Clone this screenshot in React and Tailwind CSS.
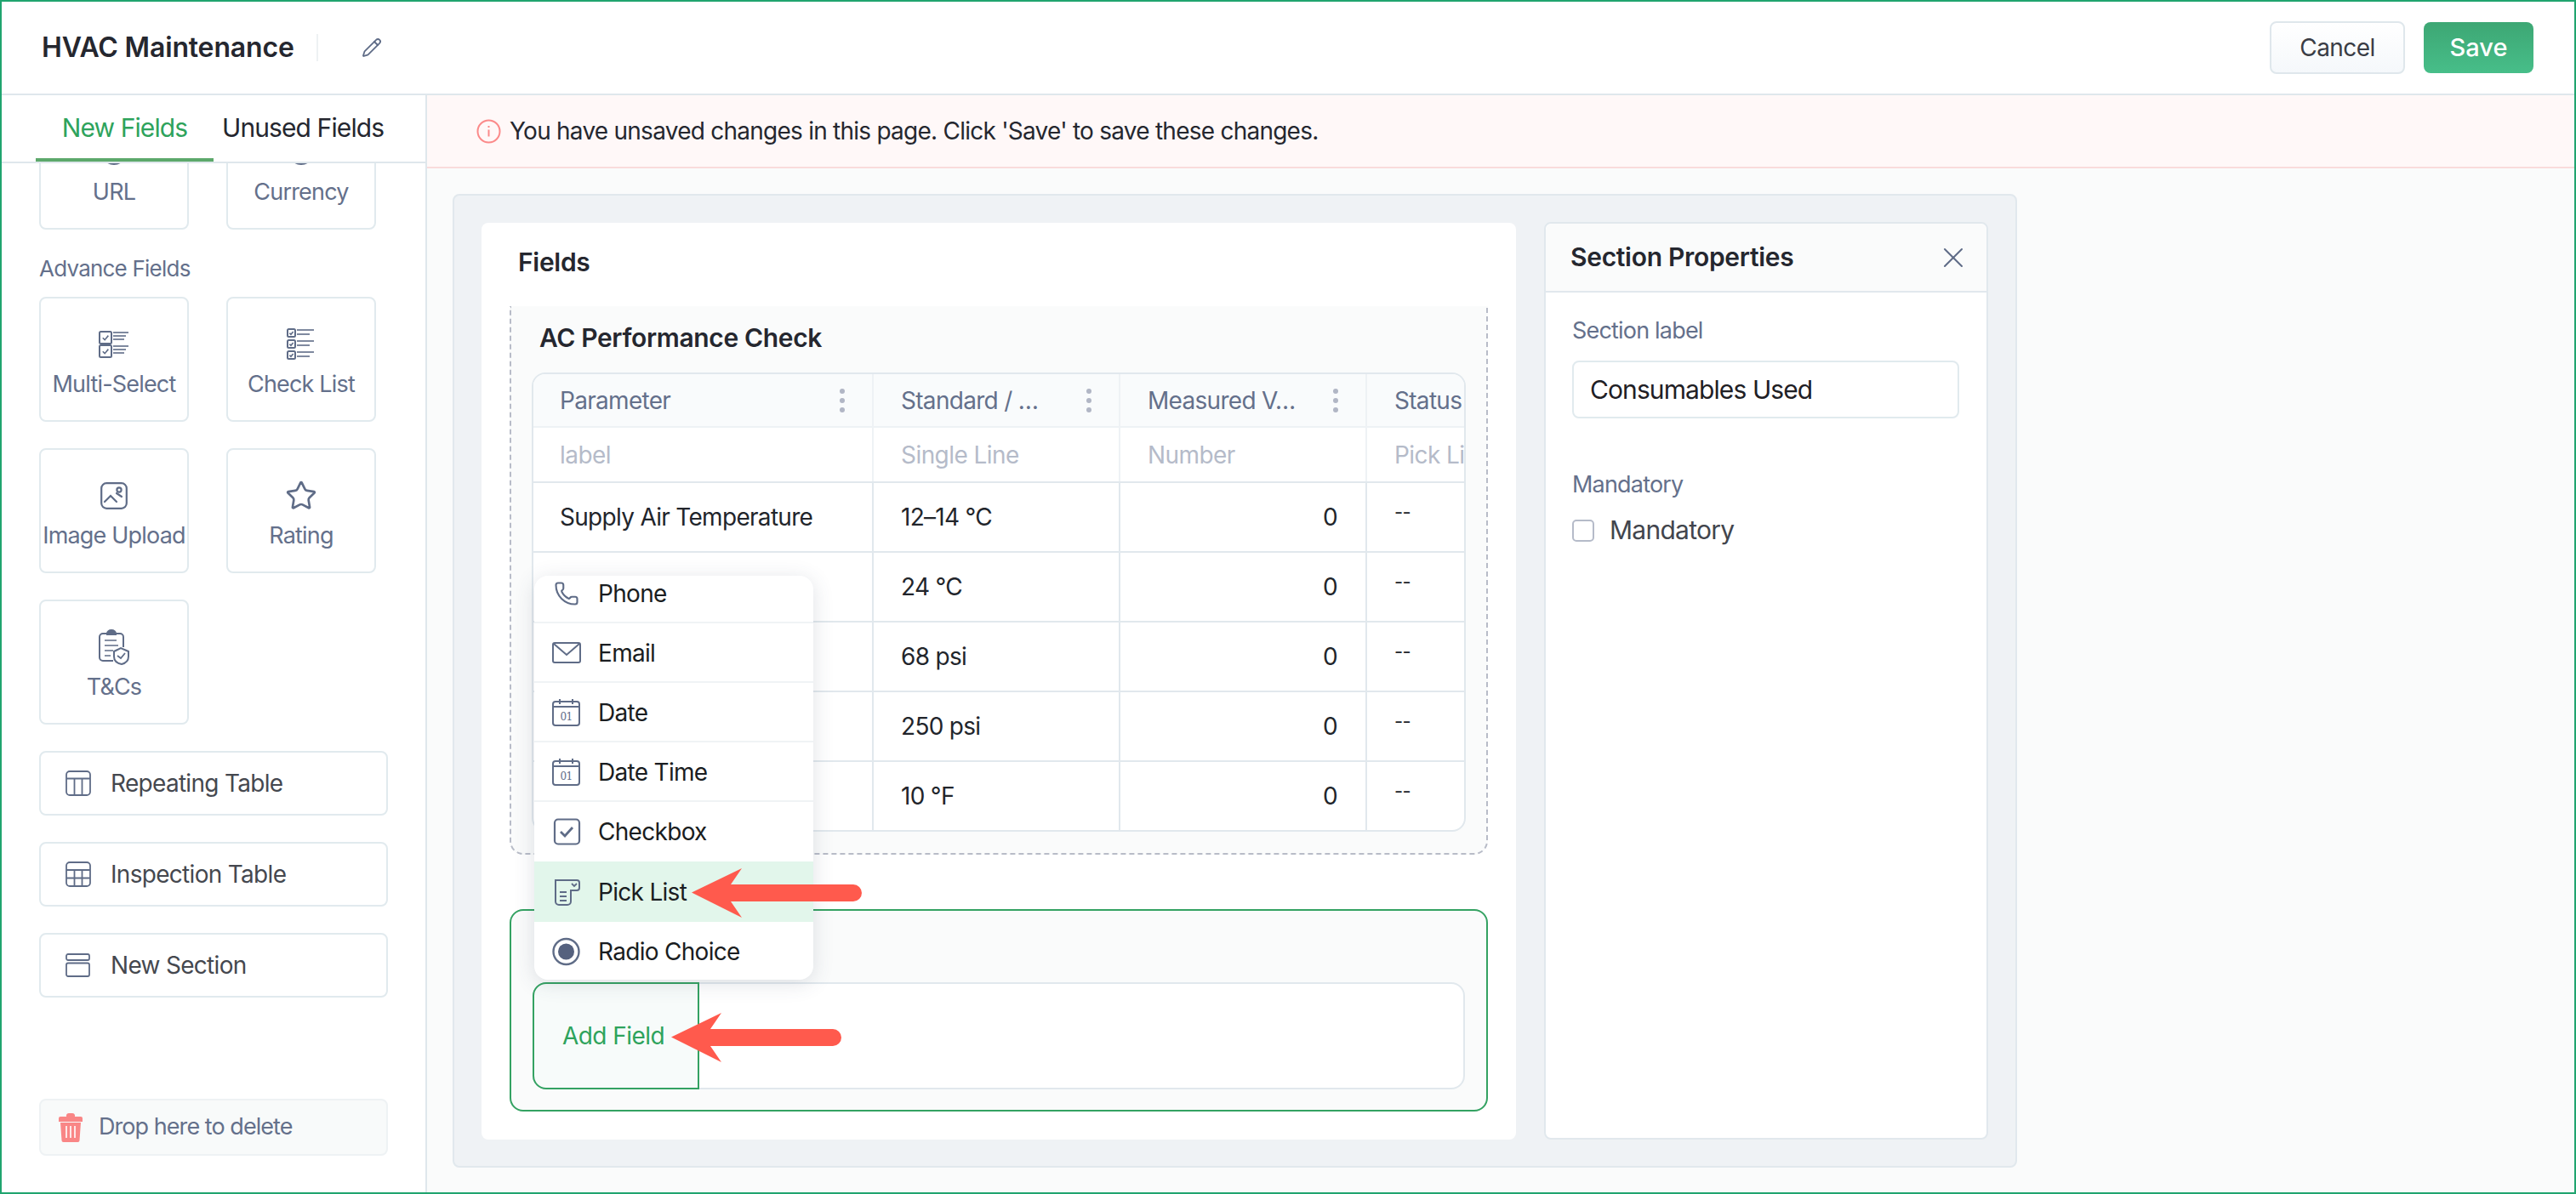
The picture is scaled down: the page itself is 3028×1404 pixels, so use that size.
// App.jsx
import React from "react";
import { Pencil, Phone, Star, X } from "lucide-react";

const ink = "#5f6c87";

const CheckRow = ({ x, y, s, w, lines }) => (
  <g>
    <rect x={x} y={y} width={s} height={s} rx="1.5" fill="none" stroke={ink} strokeWidth="2" />
    <path d={`M${x + s * 0.27} ${y + s * 0.52}l${s * 0.17} ${s * 0.17} ${s * 0.3} -${s * 0.36}`} fill="none" stroke={ink} strokeWidth="1.6" />
    {lines.map((l, i) => (
      <path key={i} d={`M${x + s + 2} ${y + l[0]}h${l[1]}`} stroke={ink} strokeWidth="1.6" />
    ))}
  </g>
);

const MultiSelectIcon = () => (
  <svg width="36" height="32" viewBox="0 0 36 32">
    <CheckRow x={1} y={1} s={14} w={18} lines={[[1, 18], [5, 15], [9, 13]]} />
    <CheckRow x={1} y={17} s={14} w={18} lines={[[1, 18], [5, 15], [9, 13]]} />
  </svg>
);

const CheckListIcon = () => (
  <svg width="34" height="38" viewBox="0 0 34 38">
    <CheckRow x={1} y={1} s={9} w={19} lines={[[1, 20], [6, 15]]} />
    <CheckRow x={1} y={14} s={9} w={19} lines={[[1, 20], [6, 15]]} />
    <CheckRow x={1} y={27} s={9} w={19} lines={[[1, 20], [6, 15]]} />
  </svg>
);

const ImageIcon = () => (
  <svg width="32" height="32" viewBox="0 0 32 32" fill="none" stroke={ink} strokeWidth="2.2">
    <rect x="1.2" y="1.2" width="29.6" height="29.6" rx="6" />
    <circle cx="22" cy="9" r="2.6" />
    <path d="M5 23l7-7 7 7M19 13l6 4" strokeLinecap="round" />
  </svg>
);

const TermsIcon = () => (
  <svg width="36" height="42" viewBox="0 0 36 42" fill="none" stroke={ink} strokeWidth="2">
    <path d="M17 37H5a4 4 0 0 1-4-4V9a4 4 0 0 1 4-4h20a4 4 0 0 1 4 4v12" />
    <path d="M10 5c0-2 2-4 5-4s5 2 5 4v1H10z" fill={ink} />
    <path d="M7 13h14M7 19h16M7 25h10M7 31h7" strokeWidth="1.6" />
    <path d="M18 26l8-4 9 4v6c0 5-4 8-8 9-5-1-9-4-9-9z" fill="#fff" />
    <path d="M22 31l4 3 5-6" strokeWidth="1.8" />
  </svg>
);

const RepeatIcon = () => (
  <svg width="30" height="30" viewBox="0 0 30 30" fill="none" stroke={ink} strokeWidth="1.8">
    <rect x="1" y="1" width="28" height="28" rx="4" />
    <path d="M1 9.5h28M10.5 9.5V29M19.5 9.5V29" />
  </svg>
);

const InspectIcon = () => (
  <svg width="30" height="30" viewBox="0 0 30 30" fill="none" stroke={ink} strokeWidth="1.8">
    <rect x="1" y="1" width="28" height="28" rx="4" />
    <path d="M1 10h28M1 19.5h28M10.5 10v19M19.5 10v19" />
  </svg>
);

const SectionIcon = () => (
  <svg width="30" height="28" viewBox="0 0 30 28" fill="none" stroke={ink} strokeWidth="1.8">
    <rect x="1" y="1" width="27" height="7" rx="2" />
    <rect x="1" y="11.5" width="27" height="15.5" rx="2" />
  </svg>
);

const TrashIcon = () => (
  <svg width="30" height="36" viewBox="0 0 30 36">
    <path d="M10 3a3 3 0 0 1 3-2h4a3 3 0 0 1 3 2v2h7a2 2 0 0 1 2 2v4H1V7a2 2 0 0 1 2-2h7z" fill="#f98686" />
    <path d="M3 12h24l-1.500 21a2 2 0 0 1-2 2H6.500a2 2 0 0 1-2-2z" fill="#f98686" />
    <path d="M10 16v14M15 16v14M20 16v14" stroke="#fff" strokeWidth="1.6" />
  </svg>
);

const MailIcon = () => (
  <svg width="34" height="26" viewBox="0 0 34 26" fill="none" stroke={ink} strokeWidth="2">
    <rect x="1" y="1" width="32" height="23" rx="2" />
    <path d="M2 2l15 13L32 2" />
  </svg>
);

const CalendarIcon = () => (
  <svg width="34" height="34" viewBox="0 0 34 34" fill="none" stroke={ink} strokeWidth="2">
    <rect x="1" y="4" width="31" height="28" rx="3" />
    <path d="M1 10h31M9 1v6M24 1v6" />
    <text x="16.500" y="26" textAnchor="middle" fontSize="12" fill={ink} stroke="none" fontFamily="'DejaVu Serif', serif">01</text>
  </svg>
);

const CheckboxIcon = () => (
  <svg width="34" height="32" viewBox="0 0 34 32" fill="none" stroke={ink} strokeWidth="2.200">
    <rect x="3" y="1.500" width="29" height="29" rx="4" />
    <path d="M10 16l5 5 9-10" strokeWidth="2.800" />
  </svg>
);

const PickListIcon = () => (
  <svg width="34" height="32" viewBox="0 0 34 32" fill="none" stroke={ink} strokeWidth="2">
    <path d="M4 2h25a3 3 0 0 1 3 3v6a3 3 0 0 1-3 3h-7v13a4 4 0 0 1-4 4H8a4 4 0 0 1-4-4z" />
    <path d="M9 16h8M9 21h8M9 26h8" />
    <path d="M23 6l3 3 3-3" strokeWidth="1.800" />
  </svg>
);

const RadioIcon = () => (
  <svg width="34" height="34" viewBox="0 0 34 34">
    <circle cx="16.500" cy="17" r="15" fill="none" stroke={ink} strokeWidth="2.400" />
    <circle cx="16.500" cy="17" r="9.500" fill="#55617e" />
  </svg>
);

const InfoIcon = () => (
  <svg width="29" height="29" viewBox="0 0 29 29" fill="none" stroke="#fb8a8a" strokeWidth="2">
    <circle cx="14.500" cy="14.500" r="13" />
    <path d="M14.500 12.500v8M14.500 8v2" />
  </svg>
);

const Kebab = () => (
  <svg width="8" height="32" viewBox="0 0 8 32" fill="#b1b6c5">
    <circle cx="4" cy="5" r="3" />
    <circle cx="4" cy="16" r="3" />
    <circle cx="4" cy="27" r="3" />
  </svg>
);

const RedArrow = ({ className }) => (
  <svg className={className} viewBox="0 0 200 58" fill="#ff5a4d">
    <path d="M0 28.500L59 0L46 19H190A10 10 0 0 1 190 39H46L59 58Z" />
  </svg>
);

function Tile({ icon, label }) {
  return (
    <div className="w-[176px] h-[147px] border-2 border-[#e1eaee] rounded-lg bg-white flex flex-col items-center pt-[36px]">
      <div className="h-[36px] flex items-center justify-center">{icon}</div>
      <div className="mt-[14px] leading-[30px] text-[27px] tracking-[-0.03em] text-[#64708b] whitespace-nowrap">{label}</div>
    </div>
  );
}

function WideButton({ icon, label }) {
  return (
    <div className="w-[410px] h-[76px] border-2 border-[#e1eaee] rounded-lg flex items-center pl-[29px]">
      <span className="w-[30px] flex justify-center">{icon}</span>
      <span className="ml-[23px] text-[28px] tracking-[-0.025em] text-[#45484f]">{label}</span>
    </div>
  );
}

const rows = [
  { name: "Supply Air Temperature", std: "12–14 °C" },
  { name: "", std: "24 °C" },
  { name: "", std: "68 psi" },
  { name: "", std: "250 psi" },
  { name: "", std: "10 °F" },
];

const menuItems = [
  { icon: <MailIcon />, label: "Email", cls: "h-[70px] pt-[2px] border-b-2 border-[#f0f3f5]" },
  { icon: <CalendarIcon />, label: "Date", cls: "h-[70px] pt-[2px] border-b-2 border-[#f0f3f5]" },
  { icon: <CalendarIcon />, label: "Date Time", cls: "h-[70px] pt-[2px] border-b-2 border-[#f0f3f5]" },
  { icon: <CheckboxIcon />, label: "Checkbox", cls: "h-[70px]" },
];

function FieldTable() {
  return (
    <div className="ml-[24px] mt-[22px] w-[1098px] h-[540px] border-2 border-[#e1e8ed] rounded-2xl overflow-hidden bg-white">
      <div className="grid grid-cols-[400px_290px_290px_400px] h-[63px] bg-[#f9fbfc] border-b-2 border-[#eef2f5] text-[28px] tracking-[-0.025em] text-[#64708b]">
        {["Parameter", "Standard / …", "Measured V…"].map((h, i) => (
          <div key={i} className={`flex items-center justify-between border-r-2 border-[#eef2f5] pr-[31px] ${i === 0 ? "pl-[31px]" : "pl-[32px]"}`}>
            <span>{h}</span>
            <Kebab />
          </div>
        ))}
        <div className="flex items-center pl-[32px]">Status</div>
      </div>
      <div className="grid grid-cols-[400px_290px_290px_400px] h-[65px] border-b-2 border-[#e1e8ed] text-[28px] tracking-[-0.02em] text-[#b5bbc9]">
        <div className="flex items-center pl-[31px] border-r-2 border-[#eef2f5]">label</div>
        <div className="flex items-center pl-[32px] border-r-2 border-[#eef2f5]">Single Line</div>
        <div className="flex items-center pl-[32px] border-r-2 border-[#eef2f5]">Number</div>
        <div className="flex items-center pl-[32px]">Pick List</div>
      </div>
      {rows.map((r, i) => (
        <div key={i} className="grid grid-cols-[400px_290px_290px_400px] h-[82px] border-b-2 border-[#e1e8ed] text-[28px] tracking-[-0.025em] text-[#22252b]">
          <div className="flex items-center pl-[31px] border-r-2 border-[#e1e8ed]">{r.name}</div>
          <div className="flex items-center pl-[32px] border-r-2 border-[#e1e8ed]">{r.std}</div>
          <div className="flex items-center justify-end pr-[33px] border-r-2 border-[#e1e8ed]">0</div>
          <div className="flex items-center pl-[32px] pb-[12px] text-[22px]">--</div>
        </div>
      ))}
    </div>
  );
}

function FieldMenu() {
  return (
    <div className="absolute left-[62px] top-[415px] w-[328px] h-[475px] bg-white rounded-2xl overflow-hidden shadow-[0_4px_24px_rgba(60,72,100,0.16)] text-[28px] tracking-[-0.025em] text-[#1a1d21]">
      <div className="h-[56px] flex items-center gap-[20px] pl-[21px] pb-[12px] border-b-2 border-[#f0f3f5]">
        <span className="w-[34px] flex justify-center"><Phone size={30} color={ink} strokeWidth={1.7} /></span>
        Phone
      </div>
      {menuItems.map((m) => (
        <div key={m.label} className={`flex items-center gap-[20px] pl-[21px] ${m.cls}`}>
          <span className="w-[34px] flex justify-center">{m.icon}</span>
          {m.label}
        </div>
      ))}
      <div className="h-[71px] flex items-center gap-[20px] pl-[21px] bg-[#e2f6eb]">
        <span className="w-[34px] flex justify-center"><PickListIcon /></span>
        Pick List
      </div>
      <div className="h-[69px] flex items-center gap-[20px] pl-[21px]">
        <span className="w-[34px] flex justify-center"><RadioIcon /></span>
        Radio Choice
      </div>
    </div>
  );
}

export default function App() {
  return (
    <div className="relative w-[3028px] h-[1404px] border-2 border-[#20a46f] flex flex-col overflow-hidden bg-white font-['Inter',sans-serif]">
      {/* Top bar */}
      <div className="h-[110px] shrink-0 flex items-center border-b-2 border-[#dfe7ec] pl-[47px] pr-[48px]">
        <span className="text-[32px] font-semibold tracking-[-0.005em] text-[#25272f]">HVAC Maintenance</span>
        <span className="ml-[26px] w-[2px] h-[32px] bg-[#eef1f3]"></span>
        <Pencil className="ml-[51px]" size={24} color={ink} strokeWidth={1.8} />
        <div className="ml-auto flex items-center gap-[22px]">
          <button className="w-[159px] h-[62px] border-2 border-[#dfe7ec] rounded-lg bg-gradient-to-b from-white to-[#f5f8fb] text-[28px] tracking-[-0.02em] text-[#3a3d45]">Cancel</button>
          <button className="w-[129px] h-[60px] rounded-lg bg-gradient-to-b from-[#3da774] to-[#47be89] text-[29px] font-medium text-white">Save</button>
        </div>
      </div>

      <div className="flex-1 flex min-h-0">
        {/* Left sidebar */}
        <div className="w-[500px] shrink-0 border-r-2 border-[#dfe7ec] flex flex-col">
          <div className="relative z-10 h-[80px] shrink-0 flex bg-white border-b-2 border-[#dfe7ec] text-[30px] tracking-[-0.03em]">
            <div className="ml-[40px] w-[209px] h-[78px] flex items-center justify-center text-[#2ea35c] border-b-4 border-[#5ca86b] pt-[2px]">New Fields</div>
            <div className="ml-[10px] h-[78px] flex items-center text-[#25272f] pb-[2px]">Unused Fields</div>
          </div>
          <div className="flex-1 min-h-0 overflow-hidden flex flex-col pl-[44px] pb-[43px]">
            <div className="-mt-[69px] grid grid-cols-[176px_176px] gap-x-[44px]">
              <Tile icon={<span className="w-[30px] h-[30px] rounded-full border-2 border-[#5f6c87]"></span>} label="URL" />
              <Tile icon={<span className="w-[30px] h-[30px] rounded-full border-2 border-[#5f6c87]"></span>} label="Currency" />
            </div>
            <div className="mt-[31px] mb-[18px] leading-[30px] text-[26px] tracking-[-0.03em] text-[#64708b]">Advance Fields</div>
            <div className="grid grid-cols-[176px_176px] gap-x-[44px] gap-y-[31px]">
              <Tile icon={<MultiSelectIcon />} label="Multi-Select" />
              <Tile icon={<CheckListIcon />} label="Check List" />
              <Tile icon={<ImageIcon />} label="Image Upload" />
              <Tile icon={<Star size={38} color={ink} strokeWidth={1.7} />} label="Rating" />
              <Tile icon={<TermsIcon />} label="T&Cs" />
            </div>
            <div className="mt-[31px] flex flex-col gap-[31px]">
              <WideButton icon={<RepeatIcon />} label="Repeating Table" />
              <WideButton icon={<InspectIcon />} label="Inspection Table" />
              <WideButton icon={<SectionIcon />} label="New Section" />
            </div>
            <div className="mt-auto w-[410px] h-[67px] border-2 border-[#eef2f4] rounded-lg bg-[#f8fafa] flex items-center pl-[20px]">
              <TrashIcon />
              <span className="ml-[18px] text-[27px] tracking-[-0.035em] text-[#64708b]">Drop here to delete</span>
            </div>
          </div>
        </div>

        {/* Main */}
        <div className="flex-1 min-w-0 flex flex-col bg-[#fafbfb]">
          <div className="h-[86px] shrink-0 flex items-center bg-[#fff8f8] border-b-2 border-[#f9dcdc] pl-[58px]">
            <InfoIcon />
            <span className="ml-[10px] text-[28px] tracking-[-0.027em] text-[#25272f]">You have unsaved changes in this page. Click 'Save' to save these changes.</span>
          </div>

          <div className="ml-[30px] mt-[30px] mb-[29px] w-[1839px] flex-1 min-h-0 border-2 border-[#e1e8ed] rounded-lg bg-[#eff2f5] flex gap-[33px] pl-[32px] pr-[32px] pt-[32px] pb-[31px]">
            {/* Fields card */}
            <div className="relative w-[1216px] shrink-0 rounded-lg bg-white pl-[33px]">
              <div className="h-[98px] flex items-center pl-[10px] pb-[6px] text-[30px] font-semibold tracking-[-0.01em] text-[#25272f]">Fields</div>
              <div className="w-[1150px] h-[645px] border-2 border-t-0 border-dashed border-[#b8bcc8] rounded-b-2xl bg-[#fafbfb]">
                <div className="pl-[33px] pt-[18px] leading-[38px] text-[30px] font-semibold tracking-[-0.012em] text-[#25272f]">AC Performance Check</div>
                <FieldTable />
              </div>
              <div className="mt-[64px] w-[1150px] h-[238px] border-2 border-[#34a262] rounded-2xl bg-[#fafbfb] pt-[84px] px-[25px]">
                <div className="flex h-[126px] border-2 border-[#e1e8ed] rounded-2xl bg-white">
                  <div className="-ml-[2px] -my-[2px] w-[196px] h-[126px] border-2 border-[#34a262] rounded-l-2xl bg-[#f7fbfa] flex items-center pl-[33px] text-[28px] tracking-[-0.02em] text-[#2ea35c]">Add Field</div>
                </div>
              </div>
              <FieldMenu />
            </div>

            {/* Section properties */}
            <div className="-mt-[1px] w-[522px] shrink-0 border-2 border-[#e1e8ed] rounded-lg bg-white">
              <div className="h-[81px] flex items-center justify-between border-b-2 border-[#e1e8ed] bg-[#fafbfb] rounded-t-lg pl-[29px] pr-[19px]">
                <span className="text-[30px] font-semibold tracking-[-0.01em] text-[#25272f]">Section Properties</span>
                <X size={40} color={ink} strokeWidth={1.2} />
              </div>
              <div className="pl-[31px] pt-[29px]">
                <div className="leading-[32px] text-[27px] tracking-[-0.03em] text-[#64708b]">Section label</div>
                <div className="mt-[19px] w-[455px] h-[68px] border-2 border-[#e1eaee] rounded-lg flex items-center pl-[19px] text-[30px] tracking-[-0.03em] text-[#1f2025]">Consumables Used</div>
                <div className="mt-[62px] leading-[32px] text-[27px] tracking-[-0.03em] text-[#64708b]">Mandatory</div>
                <div className="mt-[15px] flex items-center">
                  <span className="w-[26px] h-[26px] border-2 border-[#b5bbc9] rounded-[5px] bg-white"></span>
                  <span className="ml-[18px] text-[30px] tracking-[-0.025em] text-[#42454d]">Mandatory</span>
                </div>
              </div>
            </div>
          </div>
        </div>
      </div>

      <RedArrow className="absolute left-[811px] top-[1019px] w-[200px] h-[58px]" />
      <RedArrow className="absolute left-[787px] top-[1189px] w-[200px] h-[58px]" />
    </div>
  );
}
